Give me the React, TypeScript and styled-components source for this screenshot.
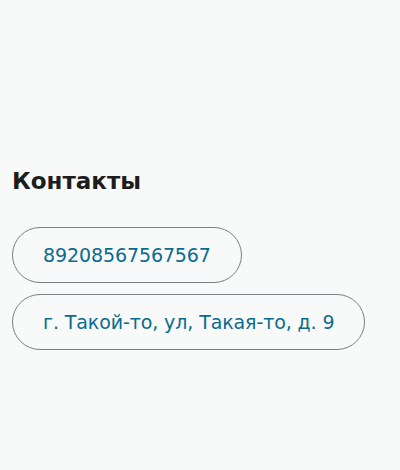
import React from "react";
import styled, { createGlobalStyle } from "styled-components";

const Global = createGlobalStyle`
  html, body { margin: 0; padding: 0; background: #f8f9f9; }
  body { font-family: "DejaVu Sans", "Noto Sans", sans-serif; }
`;

const Page = styled.div`
  width: 400px;
  height: 470px;
  box-sizing: border-box;
  padding: 166px 12px 0 12px;
  background: #f8f9f9;
`;

const Title = styled.h2`
  margin: 0 0 31px 0;
  font-size: 23px;
  line-height: 30px;
  font-weight: 700;
  color: #1d1d1d;
`;

const List = styled.div`
  display: flex;
  flex-direction: column;
  align-items: flex-start;
  gap: 11px;
`;

const Pill = styled.a`
  display: inline-flex;
  align-items: center;
  box-sizing: border-box;
  height: 56px;
  padding: 0 30px;
  border: 1px solid #7a7f82;
  border-radius: 28px;
  font-size: 19px;
  letter-spacing: -0.1px;
  color: #0b6b8f;
  text-decoration: none;
  white-space: nowrap;
`;

export default function App() {
  return (
    <>
      <Global />
      <Page>
        <Title>Контакты</Title>
        <List>
          <Pill href="#">89208567567567</Pill>
          <Pill href="#">г. Такой-то, ул, Такая-то, д. 9</Pill>
        </List>
      </Page>
    </>
  );
}
